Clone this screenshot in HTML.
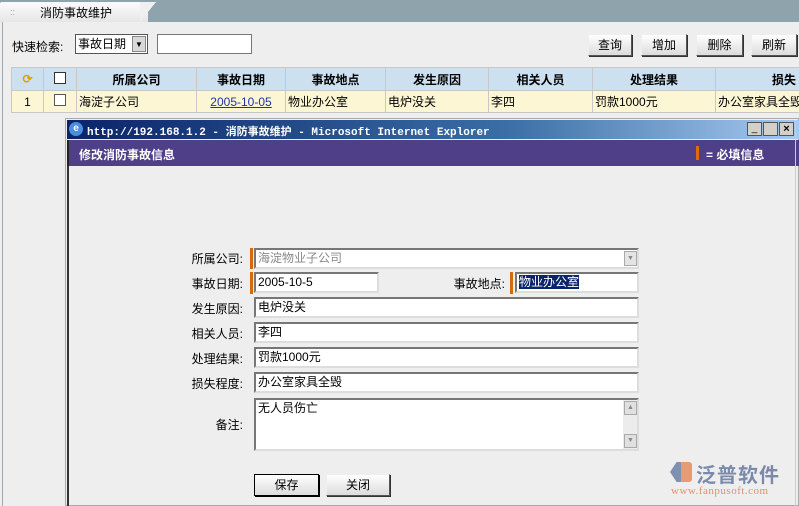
<!DOCTYPE html>
<html><head><meta charset="utf-8"><style>
*{box-sizing:border-box;margin:0;padding:0}
body{width:799px;height:506px;overflow:hidden;background:#eeeeee;font-family:"Liberation Sans","Noto Sans CJK SC",sans-serif;font-size:12px;color:#000;position:relative}
.a{position:absolute}
.btn{position:absolute;height:22px;background:linear-gradient(#fff,#dcdcdc);border:1px solid #555;border-top-color:#eee;border-left-color:#eee;box-shadow:1px 1px 0 #333;text-align:center;line-height:20px;font-size:12px}
.inp{position:absolute;background:#fff;border:2px solid;border-color:#777 #ddd #ddd #777;height:21px;line-height:17px;padding-left:2px;font-size:12px}
table{border-collapse:collapse;position:absolute;left:11px;table-layout:fixed}
td{border:1px solid #c8c8c8;height:22px;font-size:12px;padding:0 2px}
.lab{position:absolute;width:80px;text-align:right;font-size:12px;left:163px}
.mk{position:absolute;width:3px;background:#d26a10}
</style></head><body>
<div class="a" style="left:0;top:0;width:799px;height:22px;background:#8fa3ad"></div>
<div class="a" style="left:0;top:2px;width:148px;height:20px;background:linear-gradient(#fbfbfb,#e6e6e6);border-top-left-radius:2px"></div>
<div class="a" style="left:140px;top:2px;width:16px;height:20px;background:linear-gradient(to bottom right,#f0f0f0 50%,transparent 50%)"></div>
<div class="a" style="left:10px;top:7px;color:#999;font-size:9px">::</div>
<div class="a" style="left:40px;top:4px;font-size:12px">消防事故维护</div>
<div class="a" style="left:2px;top:22px;width:1px;height:484px;background:#9aaab2"></div>
<div class="a" style="left:12px;top:38px">快速检索:</div>
<div class="a" style="left:75px;top:34px;width:73px;height:20px;background:#fff;border:1px solid #555;padding-left:2px;line-height:18px">事故日期</div>
<div class="a" style="left:132px;top:36px;width:14px;height:16px;background:#d8d8d8;border:1px solid #888;font-size:8px;text-align:center;line-height:15px">▼</div>
<div class="a" style="left:157px;top:34px;width:95px;height:20px;background:#fff;border:1px solid #777"></div>
<div class="btn" style="left:588px;top:34px;width:44px">查询</div>
<div class="btn" style="left:641px;top:34px;width:46px">增加</div>
<div class="btn" style="left:696px;top:34px;width:47px">删除</div>
<div class="btn" style="left:751px;top:34px;width:46px">刷新</div>
<table style="top:67px;width:800px">
<colgroup><col style="width:32px"><col style="width:33px"><col style="width:120px"><col style="width:89px"><col style="width:100px"><col style="width:103px"><col style="width:104px"><col style="width:123px"><col style="width:96px"></colgroup>
<tr style="background:#cde0ef;font-weight:bold;text-align:center;height:23px"><td style="color:#e0a000;font-weight:bold">⟳</td><td><span style="display:inline-block;width:12px;height:12px;border:1px solid #333;background:#fff"></span></td><td>所属公司</td><td>事故日期</td><td>事故地点</td><td>发生原因</td><td>相关人员</td><td>处理结果</td><td style="text-align:left;padding-left:56px">损失</td></tr>
<tr style="background:#fdf6d4;height:20px"><td style="text-align:center">1</td><td style="text-align:center"><span style="display:inline-block;width:12px;height:12px;border:1px solid #555;background:#fff"></span></td><td>海淀子公司</td><td style="text-align:center;color:#2233aa;text-decoration:underline">2005-10-05</td><td>物业办公室</td><td>电炉没关</td><td>李四</td><td>罚款1000元</td><td style="white-space:nowrap;overflow:hidden">办公室家具全毁</td></tr>
</table>
<div class="a" style="left:65px;top:118px;width:734px;height:388px;border:1px solid #aaa;background:#eeeeee"></div>
<div class="a" style="left:67px;top:120px;width:732px;height:19px;background:linear-gradient(90deg,#0a246a,#3a6ea5 60%,#a6caf0)"></div>
<div class="a" style="left:69px;top:122px;width:14px;height:14px;border-radius:50%;background:#4a8ee0;color:#fff;font-size:10px;text-align:center;line-height:14px;font-weight:bold">e</div>
<div class="a" style="left:87px;top:123px;color:#fff;font-weight:bold;font-family:'Liberation Mono','Noto Sans CJK SC',monospace;font-size:11px;white-space:nowrap">http://192.168.1.2 - 消防事故维护 - Microsoft Internet Explorer</div>
<div class="a" style="left:747px;top:122px;width:15px;height:14px;background:#d4d0c8;border:1px solid #555;font-size:10px;text-align:center;line-height:12px">_</div>
<div class="a" style="left:763px;top:122px;width:15px;height:14px;background:#d4d0c8;border:1px solid #555"></div>
<div class="a" style="left:779px;top:122px;width:15px;height:14px;background:#d4d0c8;border:1px solid #555;font-size:11px;text-align:center;line-height:12px;font-weight:bold">×</div>
<div class="a" style="left:67px;top:140px;width:732px;height:26px;background:#4e3f88;border-left:2px solid #222"></div>
<div class="a" style="left:79px;top:146px;color:#fff;font-weight:bold">修改消防事故信息</div>
<div class="a" style="left:696px;top:146px;width:3px;height:14px;background:#e06a10"></div>
<div class="a" style="left:706px;top:146px;color:#fff;font-weight:bold">= 必填信息</div>
<div class="a" style="left:67px;top:166px;width:2px;height:340px;background:#333"></div>
<div class="lab" style="top:250px">所属公司:</div>
<div class="mk" style="left:250px;top:248px;height:21px"></div>
<div class="inp" style="left:254px;top:248px;width:385px;color:#888">海淀物业子公司</div>
<div class="a" style="left:624px;top:251px;width:13px;height:15px;background:#e4e4e4;border:1px solid #aaa;font-size:7px;color:#888;text-align:center;line-height:14px">▼</div>
<div class="lab" style="top:275px">事故日期:</div>
<div class="mk" style="left:250px;top:272px;height:22px"></div>
<div class="inp" style="left:254px;top:272px;width:125px">2005-10-5</div>
<div class="a" style="left:440px;top:275px;width:65px;text-align:right">事故地点:</div>
<div class="mk" style="left:510px;top:272px;height:22px"></div>
<div class="inp" style="left:515px;top:272px;width:124px"><span style="background:#0a246a;color:#fff">物业办公室</span></div>
<div class="lab" style="top:300px">发生原因:</div>
<div class="inp" style="left:254px;top:297px;width:385px">电炉没关</div>
<div class="lab" style="top:325px">相关人员:</div>
<div class="inp" style="left:254px;top:322px;width:385px">李四</div>
<div class="lab" style="top:350px">处理结果:</div>
<div class="inp" style="left:254px;top:347px;width:385px">罚款1000元</div>
<div class="lab" style="top:375px">损失程度:</div>
<div class="inp" style="left:254px;top:372px;width:385px">办公室家具全毁</div>
<div class="lab" style="top:416px">备注:</div>
<div class="inp" style="left:254px;top:398px;width:385px;height:53px">无人员伤亡</div>
<div class="a" style="left:623px;top:400px;width:14px;height:49px;background:#ececec"></div>
<div class="a" style="left:624px;top:401px;width:13px;height:14px;background:#e0e0e0;border:1px solid #aaa;font-size:7px;color:#888;text-align:center;line-height:12px">▲</div>
<div class="a" style="left:624px;top:434px;width:13px;height:14px;background:#e0e0e0;border:1px solid #aaa;font-size:7px;color:#888;text-align:center;line-height:12px">▼</div>
<div class="btn" style="left:254px;top:474px;width:65px;border:1px solid #000;box-shadow:1px 1px 0 #000">保存</div>
<div class="btn" style="left:326px;top:474px;width:64px">关闭</div>
<div class="a" style="left:795px;top:120px;width:1px;height:386px;background:#ccc"></div>
<div class="a" style="left:670px;top:462px;width:22px;height:20px;background:linear-gradient(90deg,#8090b0 50%,#e89a70 50%);clip-path:polygon(30% 0,100% 0,100% 100%,30% 100%,0 50%);border-radius:3px"></div>
<div class="a" style="left:696px;top:459px;font-size:20px;color:#7c8aaa;font-weight:bold;letter-spacing:1px">泛普软件</div>
<div class="a" style="left:671px;top:485px;font-size:11px;color:#e0906a;font-family:'Liberation Serif',serif;letter-spacing:0.5px">www.fanpusoft.com</div>
</body></html>
